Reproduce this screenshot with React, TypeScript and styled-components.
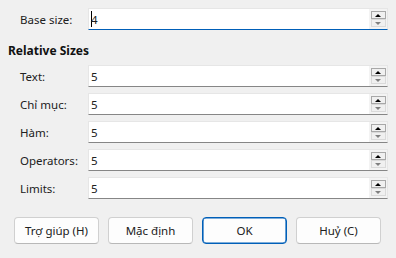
import { createGlobalStyle } from 'styled-components'
import styled from 'styled-components'

const GlobalStyle = createGlobalStyle`
  html, body {
    margin: 0;
    padding: 0;
    background: #f0f0f0;
  }
  body {
    font-family: 'Noto Sans', 'Open Sans', sans-serif;
    font-size: 11.5px;
    color: #202020;
  }
`

const rows = [
  { label: 'Text:', value: '5' },
  { label: 'Chỉ mục:', value: '5' },
  { label: 'Hàm:', value: '5' },
  { label: 'Operators:', value: '5' },
  { label: 'Limits:', value: '5' }
]

const buttons = [
  { label: 'Trợ giúp (H)', primary: false },
  { label: 'Mặc định', primary: false },
  { label: 'OK', primary: true },
  { label: 'Huỷ (C)', primary: false }
]

const SpinField = ({ value, focused }: { value: string; focused?: boolean }) => (
  <Field $focused={focused}>
    <FieldText>
      {focused && <Caret />}
      {value}
    </FieldText>
    <SpinColumn>
      <SpinButton $up>
        <Arrow $up />
      </SpinButton>
      <SpinButton>
        <Arrow />
      </SpinButton>
    </SpinColumn>
  </Field>
)

const App = () => {
  return (
    <>
      <GlobalStyle />
      <Dialog>
        <Row>
          <Label>Base size:</Label>
          <SpinField value="4" focused />
        </Row>
        <SectionTitle>Relative Sizes</SectionTitle>
        <RowList>
          {rows.map((r) => (
            <Row key={r.label}>
              <Label>{r.label}</Label>
              <SpinField value={r.value} />
            </Row>
          ))}
        </RowList>
        <ButtonBar>
          {buttons.map((b) => (
            <DialogButton key={b.label} $primary={b.primary}>
              {b.label}
            </DialogButton>
          ))}
        </ButtonBar>
      </Dialog>
    </>
  )
}

const Dialog = styled.div`
  width: 396px;
  height: 258px;
  box-sizing: border-box;
  padding: 8px 8px 0 8px;
  display: flex;
  flex-direction: column;
`

const Row = styled.div`
  display: flex;
  align-items: center;
  height: 22px;
`

const RowList = styled.div`
  display: flex;
  flex-direction: column;
  gap: 6px;
`

const Label = styled.div`
  width: 68px;
  padding-left: 12px;
`

const SectionTitle = styled.div`
  font-weight: 700;
  font-size: 12px;
  margin: 14px 0 7px 0;
  height: 14px;
  line-height: 14px;
  color: #111;
`

const Field = styled.div<{ $focused?: boolean }>`
  width: 300px;
  height: 22px;
  box-sizing: border-box;
  display: flex;
  background: #f3f3f3;
  border: 1px solid #e6e6e6;
  border-bottom: 1px solid ${({ $focused }) => ($focused ? '#005fb8' : '#868686')};
`

const FieldText = styled.div`
  flex: 1;
  background: #ffffff;
  display: flex;
  align-items: center;
  padding-left: 2px;
`

const Caret = styled.span`
  display: inline-block;
  width: 1px;
  height: 16px;
  background: #000;
  margin-right: -1px;
`

const SpinColumn = styled.div`
  width: 18px;
  display: flex;
  flex-direction: column;
  align-items: center;
  justify-content: center;
`

const SpinButton = styled.div<{ $up?: boolean }>`
  width: 15px;
  height: 8px;
  box-sizing: border-box;
  border: 1px solid ${({ $up }) => ($up ? '#a8a8a8' : '#dadada')};
  background: #f0f0f0;
  display: flex;
  align-items: center;
  justify-content: center;
`

const Arrow = styled.span<{ $up?: boolean }>`
  width: 0;
  height: 0;
  border-left: 3px solid transparent;
  border-right: 3px solid transparent;
  ${({ $up }) => ($up ? 'border-bottom: 3px solid #000;' : 'border-top: 3px solid #808080;')}
`

const ButtonBar = styled.div`
  display: flex;
  gap: 9px;
  margin-top: 18px;
  padding-left: 6px;
`

const DialogButton = styled.div<{ $primary?: boolean }>`
  width: 85px;
  height: 27px;
  box-sizing: border-box;
  display: flex;
  align-items: center;
  justify-content: center;
  background: #fdfdfd;
  border-radius: 4px;
  border: 1px solid ${({ $primary }) => ($primary ? '#005fb8' : '#d0d0d0')};
  border-bottom-color: ${({ $primary }) => ($primary ? '#005fb8' : '#b8b8b8')};
  box-shadow: ${({ $primary }) => ($primary ? 'inset 0 0 0 0.6px #005fb8' : 'none')};
`

export default App
